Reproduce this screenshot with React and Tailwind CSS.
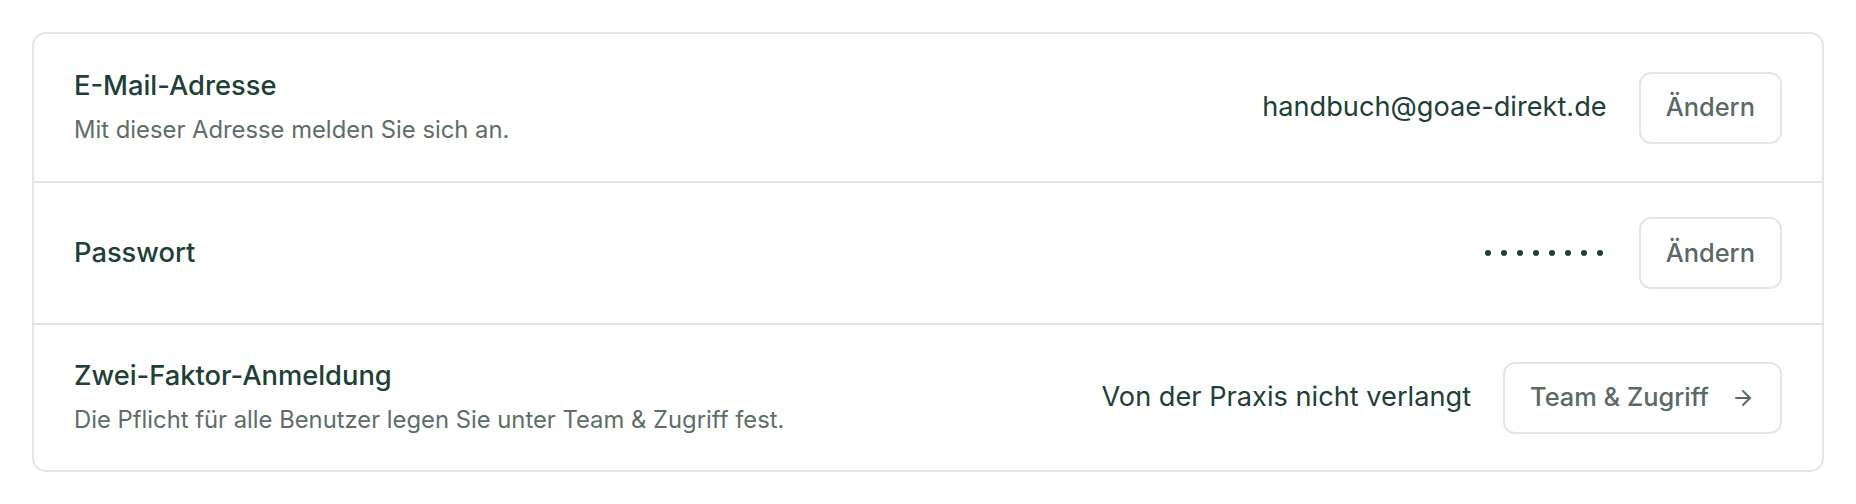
import { ArrowRight } from "lucide-react";

// Zeilen der Kontoeinstellungen
const rows = [
	{
		title: "E-Mail-Adresse",
		desc: "Mit dieser Adresse melden Sie sich an.",
		value: "handbuch@goae-direkt.de",
		action: "Ändern",
	},
	{
		title: "Passwort",
		value: "password",
		action: "Ändern",
	},
	{
		title: "Zwei-Faktor-Anmeldung",
		desc: "Die Pflicht für alle Benutzer legen Sie unter Team & Zugriff fest.",
		value: "Von der Praxis nicht verlangt",
		action: "Team & Zugriff",
		arrow: true,
	},
];

const Dots = () => (
	<div className="flex items-center gap-[10px] mr-[4px]">
		{Array.from({ length: 8 }).map((_, i) => (
			<span key={i} className="block w-[6px] h-[6px] rounded-full bg-[#1d4038]" />
		))}
	</div>
);

const App = () => {
	return (
		<div
			className="w-full min-h-screen bg-white p-8"
			style={{ fontFamily: "Inter, 'Noto Sans', sans-serif" }}
		>
			<div className="border-2 border-[#e1e7e5] rounded-[14px] bg-white">
				{rows.map((row, i) => (
					<div
						key={row.title}
						className={`flex items-center justify-between px-10 py-[34px] ${
							i > 0 ? "border-t-2 border-[#e1e7e5]" : ""
						} ${row.desc ? "min-h-[147px]" : "min-h-[140px]"}`}
					>
						<div className="flex flex-col gap-[13px]">
							<div className="text-[27.3px] leading-[32px] font-medium text-[#1d4038]">
								{row.title}
							</div>
							{row.desc && (
								<div className="text-[23.8px] leading-[30px] text-[#5d6e69]">
									{row.desc}
								</div>
							)}
						</div>
						<div className="flex items-center gap-8">
							{row.value === "password" ? (
								<Dots />
							) : (
								<div className="text-[27.2px] text-[#1d4038]">{row.value}</div>
							)}
							<button className="h-[72px] px-[25px] rounded-[12px] border-2 border-[#e1e7e5] bg-white text-[25.4px] font-medium text-[#5a6a66] flex items-center gap-[22px]">
								{row.action}
								{row.arrow && <ArrowRight size={24} strokeWidth={2} />}
							</button>
						</div>
					</div>
				))}
			</div>
		</div>
	);
};

export default App;
